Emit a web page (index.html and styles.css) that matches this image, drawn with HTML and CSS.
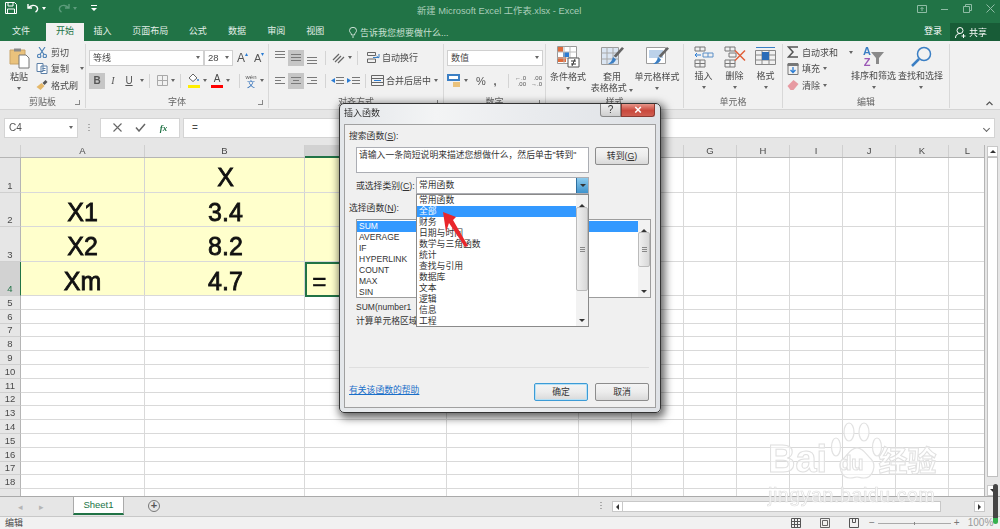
FILE: index.html
```html
<!DOCTYPE html>
<html lang="zh-CN">
<head>
    <meta charset="UTF-8">
    <title>新建 Microsoft Excel 工作表.xlsx - Excel</title>
    <link rel="stylesheet" href="styles.css">
</head>
<body>
    <div class="app">
        <!-- title bar -->
        <div class="titlebar">
            <div class="qat">
                <svg width="12" height="12" viewBox="0 0 12 12" fill="none" stroke="#fff"><path d="M.5.5h9l2 2v9H.5zM3 .5v3.5h5V.5M2.500 11.500V7h7v4.500"/></svg>
                <svg class="undo" width="12" height="10" viewBox="0 0 12 10" fill="none" stroke="#fff" stroke-width="1.400"><path d="M1 1v4h4M1.500 5C3 2 8 1.500 10 4c1.200 1.800.5 4-1.500 5"/></svg>
                <i class="caret white"></i>
                <svg class="redo" width="12" height="10" viewBox="0 0 12 10" fill="none" stroke="#5d9c7c" stroke-width="1.400"><path d="M11 1v4H7M10.500 5C9 2 4 1.500 2 4c-1.200 1.800-.5 4 1.500 5"/></svg>
                <i class="caret dim"></i>
                <svg class="custom" width="6" height="6" viewBox="0 0 6 6" fill="#fff"><path d="M0 0h6v1H0zM0 3h6L3 6z"/></svg>
            </div>
            <div class="doc-title">新建 Microsoft Excel 工作表.xlsx - Excel</div>
            <div class="winbtns">
                <svg width="10" height="8" viewBox="0 0 10 8" fill="none" stroke="#8fbca5"><path d="M.5.5h9v7h-9zM5 6V2.500M3.500 4 5 2.500 6.500 4"/></svg>
                <svg width="8" height="8" viewBox="0 0 8 8" stroke="#8fbca5"><path d="M0 4.500h7"/></svg>
                <svg width="9" height="9" viewBox="0 0 9 9" fill="none" stroke="#8fbca5"><path d="M.5 2.500h6v6h-6zM2.500 2.500v-2h6v6h-2"/></svg>
                <svg width="9" height="9" viewBox="0 0 9 9" stroke="#8fbca5"><path d="M.5.500l8 8M8.500.500l-8 8"/></svg>
            </div>
        </div>
        <div class="tabs">
            <span class="tab file">文件</span>
            <span class="tab active">开始</span>
            <span class="tab">插入</span>
            <span class="tab">页面布局</span>
            <span class="tab">公式</span>
            <span class="tab">数据</span>
            <span class="tab">审阅</span>
            <span class="tab">视图</span>
            <span class="tellme">
                <svg width="8" height="11" viewBox="0 0 8 11" fill="none" stroke="#cfe3d8"><path d="M2.500 8C2.500 6 .5 5.500.5 3.500a3.500 3.200 0 0 1 7 0C7.500 5.500 5.500 6 5.500 8zM3 10h2"/></svg>
                告诉我您想要做什么...
            </span>
            <span class="login">登录</span>
            <span class="share">
                <svg width="11" height="11" viewBox="0 0 11 11" fill="none" stroke="#fff"><circle cx="5" cy="3.500" r="3"/><path d="M.5 11c0-3 2-4.500 4.500-4.500M8.500 7v4M6.500 9h4"/></svg>
                共享
            </span>
        </div>

        <!-- ribbon -->
        <div class="ribbon">
            <div class="group g-clip">
                <div class="body">
                    <div class="big paste">
                        <svg width="21" height="22" viewBox="0 0 21 22"><path d="M1 3h15v14H1z" fill="#eac27c" stroke="#c9a468"/><path d="M5 1.500h7v3H5z" fill="#8a8a8a"/><path d="M10 8h7l3 3v10H10z" fill="#fff" stroke="#777"/></svg>
                        <span>粘贴</span><i class="caret"></i>
                    </div>
                    <div class="stack">
                        <div class="small">
                            <svg width="10" height="11" viewBox="0 0 10 11" fill="none" stroke="#4a7fb5" stroke-width="1.100"><path d="M2 0l5 7.500M8 0L3 7.500"/><circle cx="2.200" cy="9" r="1.700"/><circle cx="7.800" cy="9" r="1.700"/></svg>
                            <span>剪切</span>
                        </div>
                        <div class="small">
                            <svg width="11" height="11" viewBox="0 0 11 11" fill="#fff" stroke="#5b7fa6"><path d="M.5.500h6v8h-6zM4.500 3h6v7.500h-6z"/><path d="M6 5.500h3M6 7.500h3"/></svg>
                            <span>复制</span><i class="caret gap"></i>
                        </div>
                        <div class="small">
                            <svg width="11" height="10" viewBox="0 0 11 10"><path d="M0 7l5-4 3 3-4 4z" fill="#e5b869"/><path d="M6 3l3-3 2 2-3 3z" fill="#555"/></svg>
                            <span>格式刷</span>
                        </div>
                    </div>
                </div>
                <div class="label">剪贴板<i class="launch"></i></div>
            </div>

            <div class="group g-font">
                <div class="body col">
                    <div class="line">
                        <div class="combo font-name"><span>等线</span><i class="caret"></i></div>
                        <div class="combo font-size"><span>28</span><i class="caret"></i></div>
                        <span class="grow-a">A<sup>▴</sup></span>
                        <span class="shrink-a">A<sup>▾</sup></span>
                    </div>
                    <div class="line second">
                        <span class="fmt on b">B</span>
                        <span class="fmt i">I</span>
                        <span class="fmt u">U</span><i class="caret"></i>
                        <b class="sep"></b>
                        <svg class="borders" width="11" height="11" viewBox="0 0 11 11" fill="none" stroke="#a9a9a9"><path d="M.5.500h10v10H.5zM5.500.500v10M.5 5.500h10"/></svg><i class="caret"></i>
                        <b class="sep"></b>
                        <span class="swatch fill">
                            <svg width="11" height="9" viewBox="0 0 11 9" fill="#fff" stroke="#666"><path d="M1 5l4-4 4 4-4 3.500z"/><circle cx="10" cy="7" r="1" fill="#3b7fc4" stroke="none"/></svg>
                            <em class="yellow"></em>
                        </span><i class="caret"></i>
                        <span class="swatch letter">A<em class="red"></em></span><i class="caret"></i>
                        <b class="sep"></b>
                        <span class="wen"><small>wén</small>文</span><i class="caret"></i>
                    </div>
                </div>
                <div class="label">字体<i class="launch"></i></div>
            </div>

            <div class="group g-align">
                <div class="body col">
                    <div class="line">
                        <span class="al"><i class="lines top"></i></span>
                        <span class="al on"><i class="lines"></i></span>
                        <span class="al"><i class="lines bottom"></i></span>
                        <b class="sep"></b>
                        <svg class="orient" width="13" height="12" viewBox="0 0 13 12" fill="none" stroke="#666" stroke-width="1.200"><path d="M1 8l6-6M3 10l6-6M6 11l6-6"/></svg><i class="caret"></i>
                        <b class="sep"></b>
                        <svg class="wrap shifted" width="13" height="11" viewBox="0 0 13 11" fill="none" stroke="#666"><path d="M.5.500h8v3h-8zM.5 7h8v3.500h-8z"/><path d="M6 5.500h6V2M9.500 4l2.500 2" stroke="#3b7fc4"/></svg>
                        <span class="txt">自动换行</span>
                    </div>
                    <div class="line second">
                        <span class="al"><i class="lines left"></i></span>
                        <span class="al on"><i class="lines center"></i></span>
                        <span class="al"><i class="lines right"></i></span>
                        <b class="sep"></b>
                        <svg class="indent" width="13" height="10" viewBox="0 0 13 10"><path d="M5 1h8v1H5zM5 4h8v1H5zM5 7h8v1H5z" fill="#777"/><path d="M0 4.500 4 2v5z" fill="#2b7cd3"/></svg>
                        <svg class="indent next" width="13" height="10" viewBox="0 0 13 10"><path d="M5 1h8v1H5zM5 4h8v1H5zM5 7h8v1H5z" fill="#777"/><path d="M4 4.500 0 2v5z" fill="#2b7cd3"/></svg>
                        <b class="sep"></b>
                        <svg class="wrap" width="13" height="11" viewBox="0 0 13 11" fill="none" stroke="#666"><path d="M.5.500h12v10H.5zM.5 3.500h12M.5 7.500h12"/><path d="M3 5.500h7" stroke="#2b7cd3"/></svg>
                        <span class="txt">合并后居中</span><i class="caret gap"></i>
                    </div>
                </div>
                <div class="label">对齐方式<i class="launch"></i></div>
            </div>

            <div class="group g-num">
                <div class="body col">
                    <div class="line">
                        <div class="combo num-name"><span>数值</span><i class="caret"></i></div>
                    </div>
                    <div class="line second">
                        <svg class="money" width="14" height="13" viewBox="0 0 14 13"><path d="M0 0h13v7H0z" fill="#3b7fc4"/><path d="M2 2h9v3H2z" fill="#fff"/><path d="M6 8h7v5H6z" fill="#eac27c"/></svg><i class="caret"></i>
                        <span class="sym pct">%</span>
                        <span class="sym comma">,</span>
                        <b class="sep"></b>
                        <span class="dec">←.0<br>.00</span>
                        <span class="dec">.00<br>→.0</span>
                    </div>
                </div>
                <div class="label">数字<i class="launch"></i></div>
            </div>

            <div class="group g-style">
                <div class="body">
                    <div class="big w44">
                        <svg width="23" height="22" viewBox="0 0 23 22"><path d="M.5.500h19v17H.5z" fill="#fff" stroke="#999"/><path d="M1 1h5v5H1z" fill="#e06c3c"/><path d="M6 6h6v5H6z" fill="#2b7cd3"/><path d="M1 11h8v5H1z" fill="#e06c3c"/><path d="M7 .500v17M13 .500v17M.5 6h19M.5 12h19" stroke="#bbb" fill="none"/><path d="M11 12h11v9H11z" fill="#fff" stroke="#555"/><path d="M14 15h5M14 18h5M18 13l-3 7" stroke="#333" fill="none"/></svg>
                        <span>条件格式</span><i class="caret"></i>
                    </div>
                    <div class="big w44">
                        <svg width="23" height="22" viewBox="0 0 23 22"><path d="M.5 1.500h17v17H.5z" fill="#dbe6f3" stroke="#9c9c9c"/><path d="M6 1.500v17M12 1.500v17M.5 7h17M.5 13h17" stroke="#a9a9a9" fill="none"/><path d="M21 1l2 1.500-8 9-2.500-1.500z" fill="#666"/><path d="M12 11l3 2.500c-1 3-4 5-8 4.500 2-1 4-3 5-7z" fill="#3b7fc4"/></svg>
                        <span>套用<br>表格格式 <i class="caret inl"></i></span>
                    </div>
                    <div class="big w44 last">
                        <svg width="23" height="22" viewBox="0 0 23 22"><path d="M.5 1.500h19v16H.5z" fill="#fff" stroke="#9c9c9c"/><path d="M3 4h14v8H3z" fill="#bcd2ea"/><path d="M21 1l2 1.500-8 9-2.500-1.500z" fill="#666"/><path d="M12 11l3 2.500c-1 3-4 5-8 4.500 2-1 4-3 5-7z" fill="#3b7fc4"/></svg>
                        <span>单元格样式</span><i class="caret"></i>
                    </div>
                </div>
                <div class="label">样式</div>
            </div>

            <div class="group g-cell">
                <div class="body">
                    <div class="big w31">
                        <svg width="20" height="21" viewBox="0 0 20 21" fill="none" stroke="#777"><path d="M1 .500h10v4H1zM6 .500v4M1 13.500h10v7H1zM6 13.500v7M1 17h10"/><path d="M9 6.500h10v4H9zM14 6.500v4" stroke="#5b8fc7"/><path d="M7 8.500H1M3 6.500l-2 2 2 2" stroke="#2b7cd3"/></svg>
                        <span>插入</span><i class="caret"></i>
                    </div>
                    <div class="big w31">
                        <svg width="22" height="21" viewBox="0 0 22 21" fill="none" stroke="#777"><path d="M1 .500h10v4H1zM6 .500v4M1 13.500h10v7H1zM6 13.500v7M1 17h10M5 6.500h7v4H5z"/><path d="M11 4l10 10M21 4 11 14" stroke="#e0603a" stroke-width="1.500"/></svg>
                        <span>删除</span><i class="caret"></i>
                    </div>
                    <div class="big w31">
                        <svg width="21" height="22" viewBox="0 0 21 22" fill="none" stroke="#888"><path d="M.5 4.500h20v14H.5zM7 4.500v14M14 4.500v14M.5 9h20M.5 14h20"/><path d="M7 6h7v8H7z" fill="#2b6cb8" stroke="none"/><path d="M1 1.500h19" stroke="#3b7fc4"/></svg>
                        <span>格式</span><i class="caret"></i>
                    </div>
                </div>
                <div class="label">单元格</div>
            </div>

            <div class="group g-edit">
                <div class="body">
                    <div class="stack edit">
                        <div class="small">
                            <svg width="12" height="12" viewBox="0 0 12 12" fill="none" stroke="#555" stroke-width="1.500"><path d="M11 1H1.500L6 6l-4.500 5H11"/></svg>
                            <span>自动求和</span><i class="caret gap"></i>
                        </div>
                        <div class="small">
                            <svg width="11" height="12" viewBox="0 0 11 12" fill="none" stroke="#777"><path d="M.5.500h10v11H.5z"/><path d="M0 1h11v2H0z" fill="#777" stroke="none"/><path d="M5.500 4v5M3 7l2.500 2.500L8 7" stroke="#2b7cd3" stroke-width="1.300"/></svg>
                            <span>填充</span><i class="caret"></i>
                        </div>
                        <div class="small">
                            <svg width="11" height="10" viewBox="0 0 11 10"><path d="M0 6l6-6 5 4-5 6H3z" fill="#e79aa2"/></svg>
                            <span>清除</span><i class="caret"></i>
                        </div>
                    </div>
                    <div class="big w48 sort">
                        <div class="sort-icon">
                            <div class="az"><span class="blue">A</span><span class="purple">Z</span></div>
                            <svg width="13" height="13" viewBox="0 0 13 13"><path d="M0 1h13L8 7v6H5V7z" fill="#8a8a8a"/></svg>
                        </div>
                        <span>排序和筛选</span><i class="caret"></i>
                    </div>
                    <div class="big w48">
                        <svg width="22" height="22" viewBox="0 0 22 22" fill="none" stroke="#3b7fc4"><circle cx="14" cy="8" r="6.500" stroke-width="1.500"/><path d="M9 13l-7 7" stroke-width="2.500"/></svg>
                        <span>查找和选择</span><i class="caret"></i>
                    </div>
                </div>
                <div class="label">编辑</div>
            </div>
            <svg class="collapse" width="7" height="5" viewBox="0 0 7 5" fill="none" stroke="#555" stroke-width="1.200"><path d="M.5 4l3-3 3 3"/></svg>
        </div>

        <!-- formula bar -->
        <div class="formula">
            <div class="namebox"><span>C4</span><i class="caret"></i></div>
            <span class="dots"></span>
            <div class="fx-btns">
                <svg width="9" height="9" viewBox="0 0 9 9" stroke="#666" stroke-width="1.100"><path d="M.5.500l8 8M8.500.500l-8 8"/></svg>
                <svg width="11" height="9" viewBox="0 0 11 9" fill="none" stroke="#666" stroke-width="1.500"><path d="M1 4.500 4 8l6-7"/></svg>
                <em>fx</em>
            </div>
            <div class="input">=<i class="fold"></i></div>
        </div>

        <!-- sheet -->
        <div class="sheet">
            <div class="grid">
                <div class="colhead">
                    <span class="corner"></span>
                    <span class="ch a">A</span>
                    <span class="ch b">B</span>
                    <span class="ch c cur"></span>
                    <span class="ch d"></span>
                    <span class="ch w"></span>
                    <span class="ch w"></span>
                    <span class="ch w">G</span>
                    <span class="ch w">H</span>
                    <span class="ch w">I</span>
                    <span class="ch w">J</span>
                    <span class="ch w">K</span>
                    <span class="ch l">L</span>
                </div>
                <div class="row tall"><span class="rh">1</span><div class="cells"><span class="cell a"></span><span class="cell b">X</span><span class="cell c"></span></div></div>
                <div class="row tall"><span class="rh">2</span><div class="cells"><span class="cell a">X1</span><span class="cell b">3.4</span><span class="cell c"></span></div></div>
                <div class="row tall"><span class="rh">3</span><div class="cells"><span class="cell a">X2</span><span class="cell b">8.2</span><span class="cell c"></span></div></div>
                <div class="row tall"><span class="rh cur">4</span><div class="cells"><span class="cell a">Xm</span><span class="cell b">4.7</span><span class="cell c sel">=</span></div></div>
                <div class="row"><span class="rh">5</span><div class="cells"></div></div>
                <div class="row"><span class="rh">6</span><div class="cells"></div></div>
                <div class="row"><span class="rh">7</span><div class="cells"></div></div>
                <div class="row"><span class="rh">8</span><div class="cells"></div></div>
                <div class="row"><span class="rh">9</span><div class="cells"></div></div>
                <div class="row"><span class="rh">10</span><div class="cells"></div></div>
                <div class="row"><span class="rh">11</span><div class="cells"></div></div>
                <div class="row"><span class="rh">12</span><div class="cells"></div></div>
                <div class="row"><span class="rh">13</span><div class="cells"></div></div>
                <div class="row"><span class="rh">14</span><div class="cells"></div></div>
                <div class="row"><span class="rh">15</span><div class="cells"></div></div>
                <div class="row"><span class="rh">16</span><div class="cells"></div></div>
                <div class="row"><span class="rh">17</span><div class="cells"></div></div>
                <div class="row"><span class="rh">18</span><div class="cells"></div></div>
                <div class="row"><span class="rh"></span><div class="cells"></div></div>
            </div>
            <div class="vscroll">
                <span class="sb-btn"><i class="tri up"></i></span>
                <span class="sb-thumb"></span>
                <span class="sb-btn"><i class="tri"></i></span>
            </div>
        </div>

        <!-- sheet tabs -->
        <div class="sheetbar">
            <span class="nav">◂</span>
            <span class="nav">▸</span>
            <span class="sheet-tab">Sheet1</span>
            <span class="add">+</span>
            <span class="dots tabdots"></span>
            <div class="hscroll">
                <span class="hs-btn"><i class="tri left"></i></span>
                <span class="hs-thumb"></span>
                <span class="hs-track"></span>
                <span class="hs-btn"><i class="tri right"></i></span>
            </div>
        </div>

        <!-- status bar -->
        <div class="status">
            <span class="mode">编辑</span>
            <div class="views">
                <svg width="10" height="10" viewBox="0 0 10 10" fill="none" stroke="#555"><path d="M.5.500h9v9h-9zM3.500.500v9M6.500.500v9M.5 3.500h9M.5 6.500h9"/></svg>
                <svg width="10" height="10" viewBox="0 0 10 10" fill="none" stroke="#666"><path d="M.5.500h9v9h-9zM2.500 2.500h5v5h-5z"/></svg>
                <svg width="10" height="10" viewBox="0 0 10 10" fill="none" stroke="#555"><path d="M.5.500h9v9h-9zM3.500.500v4h3v-4"/></svg>
            </div>
            <div class="zoom">
                <span>−</span>
                <i class="slider"></i>
                <span>+</span>
                <span class="pct-z">100%</span>
            </div>
        </div>

        <!-- Insert function dialog -->
        <div class="dialog">
            <div class="dlg-title">
                <span>插入函数</span>
                <div class="dlg-btns"><span class="help">?</span><span class="close">×</span></div>
            </div>
            <div class="panel">
                <div class="lbl">搜索函数(<u>S</u>):</div>
                <div class="search-row">
                    <div class="search-box">请输入一条简短说明来描述您想做什么，然后单击"转到"</div>
                    <span class="btn">转到(<u>G</u>)</span>
                </div>
                <div class="cat-row">
                    <span class="cat-lbl">或选择类别(<u>C</u>):</span>
                    <div class="select">常用函数<span class="sel-arrow"><i class="tri"></i></span></div>
                </div>
                <div class="lbl pick">选择函数(<u>N</u>):</div>
                <div class="fn-list">
                    <div class="fn-items">
                        <div class="hl">SUM</div>
                        <div>AVERAGE</div>
                        <div>IF</div>
                        <div>HYPERLINK</div>
                        <div>COUNT</div>
                        <div>MAX</div>
                        <div>SIN</div>
                    </div>
                    <div class="list-sb">
                        <span class="up"><i class="tri up"></i></span>
                        <span class="th"><b></b></span>
                        <span class="dn"><i class="tri"></i></span>
                    </div>
                </div>
                <div class="sig">SUM(number1</div>
                <div class="desc">计算单元格区域</div>
                <div class="foot">
                    <a class="help-link">有关该函数的帮助</a>
                    <span class="btn default">确定</span>
                    <span class="btn">取消</span>
                </div>
                <div class="dropdown">
                    <div class="dd-items">
                        <div>常用函数</div>
                        <div class="hl">全部</div>
                        <div>财务</div>
                        <div>日期与时间</div>
                        <div>数学与三角函数</div>
                        <div>统计</div>
                        <div>查找与引用</div>
                        <div>数据库</div>
                        <div>文本</div>
                        <div>逻辑</div>
                        <div>信息</div>
                        <div>工程</div>
                    </div>
                    <div class="list-sb">
                        <span class="up"><i class="tri up"></i></span>
                        <span class="th"><b></b></span>
                        <span class="dn"><i class="tri"></i></span>
                    </div>
                </div>
            </div>
        </div>

        <!-- annotation arrow -->
        <svg class="arrow" width="32" height="42" viewBox="0 0 32 42"><path d="M2 3l13 5-3 3 15 26-3 1-16-24-3 9z" fill="#e9262b"/></svg>

        <!-- watermark -->
        <div class="mark">
            <svg class="paw" width="54" height="58" viewBox="0 0 54 58" fill="rgba(255,255,255,.6)" stroke="#e2e2e2" stroke-width="1.200"><ellipse cx="6" cy="25" rx="4.500" ry="9"/><ellipse cx="19" cy="10" rx="5" ry="9"/><ellipse cx="34" cy="10" rx="5" ry="9"/><ellipse cx="47" cy="25" rx="4.500" ry="9"/><path d="M27 26c6 0 9 6 14 11 6 6 2 19-7 19-4 0-5-1-7-1s-3 1-7 1c-9 0-13-13-7-19 5-5 8-11 14-11z"/></svg>
            <div class="mark-big"><span>Bai</span><span class="du">du</span><span class="jy">经验</span></div>
            <div class="mark-url">jingyan.baidu.com</div>
        </div>

        <div class="rec-bar"></div>
    </div>
</body>
</html>
```

FILE: styles.css
```css
* {
    box-sizing: border-box;
}

body {
    margin: 0;
    font-family: "Liberation Sans", "Noto Sans CJK SC", sans-serif;
    font-size: 9px;
    color: #4a4a4a;
    background: #fff;
}

.app {
    position: relative;
    width: 1000px;
    height: 529px;
    overflow: hidden;
    display: flex;
    flex-direction: column;
    filter: blur(.3px); /* the capture is soft */
}

i, em, u {
    font-style: normal;
}

/* little triangles */
.caret {
    display: inline-block;
    width: 0;
    height: 0;
    border: 2.5px solid transparent;
    border-top: 3px solid #666;
    border-bottom: 0;
    flex: none;
}

.caret.white { border-top-color: #fff; }
.caret.dim { border-top-color: #5d9c7c; }
.caret.gap { margin-left: 8px; }
.caret.inl { vertical-align: middle; }

.tri {
    display: inline-block;
    width: 0;
    height: 0;
    border-left: 3px solid transparent;
    border-right: 3px solid transparent;
    border-top: 3px solid #333;
}

.tri.up {
    border-top: 0;
    border-bottom: 3px solid #333;
}

.tri.left {
    border: 0;
    border-top: 3px solid transparent;
    border-bottom: 3px solid transparent;
    border-right: 3px solid #333;
}

.tri.right {
    border: 0;
    border-top: 3px solid transparent;
    border-bottom: 3px solid transparent;
    border-left: 3px solid #333;
}

/* title bar */
.titlebar {
    height: 23px;
    background: #217346;
    display: flex;
    align-items: flex-start;
    flex: none;
}

.qat {
    width: 200px;
    padding: 2px 0 0 5px;
    display: flex;
    align-items: center;
    gap: 3px;
}

.qat .undo { margin-left: 7px; }
.qat .redo { margin-left: 9px; }
.qat .custom { margin-left: 11px; }

.doc-title {
    width: 520px;
    padding: 5px 0 0 217px;
    font-size: 9.300px;
    line-height: 12px;
    color: #a9cdb9;
    white-space: nowrap;
}

.winbtns {
    margin-left: auto;
    display: flex;
    align-items: center;
    gap: 14px;
    padding: 4px 5px 0 0;
}

.tabs {
    height: 18px;
    background: #217346;
    display: flex;
    align-items: flex-end;
    flex: none;
    color: #e4efe9;
    padding-left: 3px;
}

.tab {
    width: 39.200px;
    height: 18px;
    line-height: 17px;
    text-align: center;
    white-space: nowrap;
}

.tab.file { width: 36px; }

.tab.active {
    width: 38px;
    margin-left: 7px;
    margin-right: -1px;
    background: #f1f1f1;
    color: #217346;
}

.tab:nth-child(4) { width: 56px; }

.tellme {
    margin-left: 14px;
    height: 18px;
    display: flex;
    align-items: center;
    gap: 3px;
    color: #c9e0d3;
}

.login {
    margin-left: auto;
    height: 18px;
    line-height: 17px;
    margin-right: 8px;
    color: #fff;
}

.share {
    width: 50px;
    height: 18px;
    background: #185c37;
    color: #fff;
    display: flex;
    align-items: center;
    gap: 3px;
    padding-left: 5px;
}

/* ribbon */
.ribbon {
    position: relative;
    height: 69px;
    background: #f1f1f1;
    border-bottom: 1px solid #d4d4d4;
    display: flex;
    flex: none;
}

.group {
    position: relative;
    display: flex;
    flex-direction: column;
    border-right: 1px solid #d8d8d8;
    margin: 3px 0 1px;
    flex: none;
}

.g-clip { width: 86px; }
.g-font { width: 183px; }
.g-align { width: 175px; }
.g-num { width: 102px; }
.g-style { width: 138px; }
.g-cell { width: 99px; }
.g-edit { width: 167px; }

.group .body {
    height: 52px;
    display: flex;
    align-items: flex-start;
}

.group .body.col {
    flex-direction: column;
}

.label {
    position: relative;
    height: 12px;
    line-height: 12px;
    margin-top: 1px;
    text-align: center;
    color: #666;
}

.launch {
    position: absolute;
    right: 5px;
    top: 4px;
    width: 5px;
    height: 5px;
    border-left: 1px solid #888;
    border-bottom: 1px solid #888;
    transform: scaleX(-1);
}

.big {
    display: flex;
    flex-direction: column;
    align-items: center;
    line-height: 11px;
    text-align: center;
    flex: none;
    white-space: nowrap;
}

.big svg {
    height: 22px;
    margin-bottom: 3px;
}

.big .caret {
    margin-top: 4px;
}

.paste {
    width: 28px;
    margin-left: 5px;
    padding-top: 3px;
}

.stack {
    margin-left: 3px;
    display: flex;
    flex-direction: column;
}

.small {
    height: 16.500px;
    display: flex;
    align-items: center;
    gap: 3px;
    white-space: nowrap;
}

.small svg {
    width: 12px;
    flex: none;
}

.line {
    height: 17px;
    margin-top: 5px;
    display: flex;
    align-items: center;
    flex: none;
}

.line.second {
    margin-top: 6px;
}

.combo {
    height: 16px;
    background: #fff;
    border: 1px solid #d0d0d0;
    display: flex;
    align-items: center;
    justify-content: space-between;
    padding: 0 3px;
}

.font-name { width: 115px; margin-left: 3px; }
.font-size { width: 29px; font-size: 9.500px; }
.num-name { width: 96px; margin-left: 3px; }

.grow-a, .shrink-a {
    font-size: 11px;
    color: #555;
    margin-left: 4px;
    width: 15px;
    white-space: nowrap;
}

.grow-a { font-size: 12px; }

.grow-a sup, .shrink-a sup {
    font-size: 6px;
    color: #2b7cd3;
    vertical-align: 6px;
    line-height: 0;
}

.shrink-a { margin-left: 2px; }

.g-font .second { padding-left: 3px; }

.fmt {
    width: 16px;
    height: 16px;
    line-height: 16px;
    text-align: center;
    font-size: 10px;
    color: #555;
}

.fmt.on { background: #c6c6c6; }
.fmt.b { font-weight: bold; }
.fmt.i { font-style: italic; font-family: "Liberation Serif", serif; }
.fmt.u { text-decoration: underline; }

.second .caret { margin-left: 3px; }

.sep {
    width: 1px;
    height: 14px;
    background: #d4d4d4;
    margin: 0 5px;
    flex: none;
}

.borders { margin-left: 2px; flex: none; }

.swatch {
    position: relative;
    width: 12px;
    height: 15px;
    display: block;
    flex: none;
}

.swatch.fill { margin-left: 2px; }

.swatch + .caret { margin-right: 4px; }

.swatch svg { display: block; }

.swatch em {
    position: absolute;
    left: 0;
    bottom: 0;
    width: 12px;
    height: 3px;
}

.yellow { background: #ffef00; }
.red { background: #f00; }

.letter {
    font-size: 10px;
    line-height: 12px;
    text-align: center;
}

.wen {
    width: 12px;
    font-size: 8px;
    line-height: 7px;
    text-align: center;
    color: #2b6cb8;
}

.wen small {
    display: block;
    font-size: 6px;
    color: #555;
}

.al {
    width: 16px;
    height: 16px;
    display: flex;
    flex: none;
    align-items: center;
    justify-content: center;
}

.al.on { background: #c6c6c6; }

.g-align .line { padding-left: 3px; }

.lines {
    display: block;
    width: 10px;
    height: 7px;
    background:
        linear-gradient(#7a7a7a, #7a7a7a) 0 0 / 10px 1px no-repeat,
        linear-gradient(#7a7a7a, #7a7a7a) 0 3px / 10px 1px no-repeat,
        linear-gradient(#7a7a7a, #7a7a7a) 0 6px / 10px 1px no-repeat;
}

.lines.top { transform: translateY(-3px); }
.lines.bottom { transform: translateY(3px); }

.lines.left {
    background:
        linear-gradient(#7a7a7a, #7a7a7a) 0 0 / 10px 1px no-repeat,
        linear-gradient(#7a7a7a, #7a7a7a) 0 3px / 6px 1px no-repeat,
        linear-gradient(#7a7a7a, #7a7a7a) 0 6px / 10px 1px no-repeat;
}

.lines.center {
    background:
        linear-gradient(#7a7a7a, #7a7a7a) 0 0 / 10px 1px no-repeat,
        linear-gradient(#7a7a7a, #7a7a7a) 2px 3px / 6px 1px no-repeat,
        linear-gradient(#7a7a7a, #7a7a7a) 0 6px / 10px 1px no-repeat;
}

.lines.right {
    background:
        linear-gradient(#7a7a7a, #7a7a7a) 0 0 / 10px 1px no-repeat,
        linear-gradient(#7a7a7a, #7a7a7a) 4px 3px / 6px 1px no-repeat,
        linear-gradient(#7a7a7a, #7a7a7a) 0 6px / 10px 1px no-repeat;
}

.orient { flex: none; margin-left: 1px; }

.orient + .caret { margin-left: 3px; }

.indent { flex: none; }
.indent + .indent { margin-left: 3px; }

.wrap { flex: none; margin-right: 2px; }
.wrap.shifted { margin-left: 4px; }

.txt { white-space: nowrap; }

.g-num .second { padding-left: 3px; }

.money { flex: none; }

.sym {
    font-size: 11px;
    color: #555;
    width: 14px;
    text-align: center;
}

.pct { margin-left: 6px; }
.comma { font-weight: bold; }

.dec {
    width: 12px;
    font-size: 6px;
    line-height: 6px;
    text-align: right;
    margin-right: 4px;
    color: #555;
    white-space: nowrap;
}

.g-num .sep { margin-left: 6px; }

.w44 { width: 44px; }
.w44.last { width: 46px; }
.w44 svg { margin-top: 2px; margin-bottom: 4px; }
.w31 { width: 31px; padding-top: 2px; }
.w31:first-child { margin-left: 4px; }
.w48 { width: 47px; padding-top: 2px; }
.sort { margin-left: 3px; }

.stack.edit { margin-left: 4px; width: 60px; }

.sort-icon {
    height: 22px;
    margin-bottom: 3px;
    display: flex;
    align-items: center;
}

.sort-icon svg {
    height: 13px;
    margin: 0;
}

.az {
    display: flex;
    flex-direction: column;
    font-size: 11px;
    line-height: 11px;
    font-weight: bold;
}

.blue { color: #3b7fc4; }
.purple { color: #9b59b6; }

.collapse {
    position: absolute;
    left: 986px;
    top: 60px;
}

/* formula bar */
.formula {
    height: 35px;
    background: #e6e6e6;
    display: flex;
    align-items: center;
    padding: 0 5px 0 4px;
    flex: none;
}

.namebox {
    width: 74px;
    height: 20px;
    background: #fff;
    border: 1px solid #d4d4d4;
    display: flex;
    align-items: center;
    justify-content: space-between;
    padding: 0 4px;
    font-size: 10px;
    color: #555;
}

.dots {
    width: 2px;
    height: 8px;
    margin: 0 10px;
    background: repeating-linear-gradient(#aaa 0 1px, transparent 1px 3px);
}

.fx-btns {
    width: 80px;
    height: 20px;
    background: #fff;
    border: 1px solid #d4d4d4;
    display: flex;
    align-items: center;
    justify-content: space-around;
    padding: 0 5px;
}

.fx-btns em {
    font: italic bold 9px "Liberation Serif", serif;
    color: #217346;
}

.input {
    position: relative;
    flex: 1;
    height: 20px;
    margin-left: 3px;
    background: #fff;
    border: 1px solid #d4d4d4;
    padding-left: 8px;
    line-height: 18px;
    font-size: 10px;
}

.fold {
    position: absolute;
    right: 5px;
    top: 7px;
    width: 5px;
    height: 5px;
    border-right: 1px solid #666;
    border-bottom: 1px solid #666;
    transform: rotate(45deg);
}

/* sheet */
.sheet {
    height: 351px;
    display: flex;
    flex: none;
}

.grid {
    width: 985px;
    border-right: 1px solid #b5b5b5;
    overflow: hidden;
}

.colhead {
    height: 13px;
    display: flex;
    background: #e6e6e6;
    border-bottom: 1px solid #b5b5b5;
    font-size: 9.500px;
    line-height: 12px;
}

.corner {
    width: 21px;
    border-right: 1px solid #cfcfcf;
    flex: none;
}

.ch {
    border-right: 1px solid #cfcfcf;
    text-align: center;
    flex: none;
}

.ch.a { width: 124px; }
.ch.b { width: 160px; }
.ch.c { width: 142px; }
.ch.d { width: 131px; }
.ch.w { width: 53px; }
.ch.l { width: 37px; border: 0; }

.ch.cur {
    background: #d2d2d2;
    border-bottom: 2px solid #217346;
    height: 13px;
}

.row {
    height: 13.800px;
    display: flex;
}

.row.tall {
    height: 34.500px;
}

.rh {
    width: 21px;
    flex: none;
    background: #e6e6e6;
    border-right: 1px solid #b5b5b5;
    border-bottom: 1px solid #cfcfcf;
    display: flex;
    align-items: flex-end;
    justify-content: center;
    font-size: 9.500px;
    line-height: 12px;
}

.rh.cur {
    background: #d2d2d2;
    color: #217346;
    border-right: 1px solid #217346;
}

.cells {
    flex: 1;
    display: flex;
    border-bottom: 1px solid #d9d9d9;
    background-image:
        linear-gradient(#d9d9d9, #d9d9d9), linear-gradient(#d9d9d9, #d9d9d9),
        linear-gradient(#d9d9d9, #d9d9d9), linear-gradient(#d9d9d9, #d9d9d9),
        linear-gradient(#d9d9d9, #d9d9d9), linear-gradient(#d9d9d9, #d9d9d9),
        linear-gradient(#d9d9d9, #d9d9d9), linear-gradient(#d9d9d9, #d9d9d9),
        linear-gradient(#d9d9d9, #d9d9d9), linear-gradient(#d9d9d9, #d9d9d9),
        linear-gradient(#d9d9d9, #d9d9d9);
    background-size: 1px 100%;
    background-repeat: no-repeat;
    background-position: 123px 0, 283px 0, 425px 0, 557px 0, 610px 0, 662px 0,
        715px 0, 768px 0, 821px 0, 874px 0, 927px 0;
}

.cell {
    background: #ffffcc;
    border-right: 1px solid #d4d4d4;
    text-align: center;
    padding-top: 2px;
    font-size: 25px;
    line-height: 34px;
    color: #111;
    -webkit-text-stroke: .8px #111;
    flex: none;
}

.cell.a { width: 124px; }
.cell.b { width: 160px; padding-left: 2px; }
.cell.c { width: 142px; }

.cell.sel {
    outline: 2px solid #217346;
    outline-offset: -2px;
    text-align: left;
    padding-left: 7px;
    height: 35px;
    -webkit-text-stroke: .3px #111;
}

.vscroll {
    width: 15px;
    background: #e6e6e6;
    padding: 1px 2px;
    display: flex;
    flex-direction: column;
}

.sb-btn {
    height: 11px;
    background: #fff;
    border: 1px solid #c8c8c8;
    display: flex;
    align-items: center;
    justify-content: center;
    flex: none;
}

.sb-thumb {
    height: 320px;
    background: #fff;
    border: 1px solid #c0c0c0;
    margin-bottom: 8px;
    flex: none;
}

/* sheet tabs */
.sheetbar {
    height: 21px;
    background: #e6e6e6;
    border-top: 1px solid #aaa;
    border-bottom: 1px solid #c8c8c8;
    display: flex;
    align-items: flex-start;
    flex: none;
}

.nav {
    width: 21px;
    margin-top: 3px;
    text-align: center;
    color: #b5b5b5;
    line-height: 14px;
}

.nav:first-child { margin-left: 10px; }

.sheet-tab {
    width: 51px;
    height: 18px;
    margin-left: 21px;
    background: #fff;
    border: 1px solid #aaa;
    border-top: 0;
    border-bottom: 2px solid #217346;
    color: #217346;
    text-align: center;
    line-height: 16px;
    font-size: 9.500px;
}

.add {
    width: 12px;
    height: 12px;
    margin: 3px 0 0 24px;
    border: 1px solid #777;
    border-radius: 50%;
    text-align: center;
    line-height: 9px;
    font-size: 11px;
    font-weight: bold;
    color: #555;
}

.tabdots {
    margin: 5px 0 0 440px;
}

.hscroll {
    margin-left: auto;
    margin-top: 4px;
    display: flex;
    padding-right: 15px;
    width: 388px;
    height: 11px;
}

.hs-btn {
    width: 11px;
    height: 11px;
    background: #fff;
    border: 1px solid #c8c8c8;
    display: flex;
    align-items: center;
    justify-content: center;
    flex: none;
}

.hs-thumb {
    width: 318px;
    background: #fff;
    border: 1px solid #c8c8c8;
    border-left: 0;
    flex: none;
}

.hs-track { flex: 1; }

/* status bar */
.status {
    flex: 1;
    background: #f1f1f1;
    display: flex;
    align-items: center;
    line-height: 12px;
    padding-left: 5px;
}

.views {
    margin-left: 768px;
    display: flex;
    gap: 19px;
    width: 70px;
    flex: none;
}

.zoom {
    display: flex;
    align-items: center;
    color: #777;
    margin-left: 8px;
    font-size: 10px;
    flex: none;
}

.slider {
    position: relative;
    width: 73px;
    height: 1px;
    margin: 0 3px;
    background: #aaa;
}

.slider::after {
    content: "";
    position: absolute;
    left: 36px;
    top: -1px;
    width: 1px;
    height: 3px;
    background: #888;
}

.pct-z {
    margin-left: 8px;
    color: #999;
    white-space: nowrap;
}

/* dialog */
.dialog {
    position: absolute;
    left: 339px;
    top: 103px;
    width: 322px;
    height: 310px;
    border: 1px solid #333;
    border-radius: 5px;
    background: linear-gradient(90deg, #e4e7ea, #f3f4f5 30%, #e9ebee 60%, #dfe2e6);
    box-shadow: 2px 3px 8px 2px rgba(0, 0, 0, .6);
    padding: 0 4px 4px;
    display: flex;
    flex-direction: column;
    font-size: 8.800px;
    line-height: 11px;
    color: #333;
}

.dlg-title {
    height: 20px;
    padding-top: 4px;
    display: flex;
    justify-content: space-between;
    flex: none;
    font-size: 9px;
}

.dlg-btns {
    display: flex;
    margin-top: -4px;
    margin-right: 1px;
    height: 13px;
}

.help {
    width: 21px;
    border: 1px solid #888;
    border-top: 0;
    border-radius: 0 0 0 3px;
    background: linear-gradient(#f0f0f0, #cfcfcf);
    text-align: center;
    font-size: 10px;
    line-height: 11px;
}

.close {
    width: 34px;
    border: 1px solid #8c3a32;
    border-top: 0;
    border-radius: 0 0 3px 0;
    background: linear-gradient(#e8968a, #c9483c 55%, #cf5f52);
    color: #fff;
    text-align: center;
    font-weight: bold;
    font-size: 13px;
    line-height: 11px;
}

.panel {
    position: relative;
    flex: 1;
    background: #f0f0f0;
    border: 1px solid #a0a0a0;
    padding: 6px 6px 5px 4px;
    display: flex;
    flex-direction: column;
}

.lbl {
    height: 11px;
    flex: none;
}

.search-row {
    display: flex;
    justify-content: space-between;
    margin: 5px 0 0 7px;
    flex: none;
}

.search-box {
    width: 233px;
    height: 26px;
    background: #fff;
    border: 1px solid #abadb3;
    padding: 2px 2px;
    white-space: nowrap;
    overflow: hidden;
}

.btn {
    width: 54px;
    height: 18px;
    border: 1px solid #8c8c8c;
    border-radius: 2px;
    background: linear-gradient(#f4f4f4, #ececec 50%, #d9d9d9);
    text-align: center;
    line-height: 16px;
    flex: none;
}

.btn.default {
    border-color: #3c9bd6;
    box-shadow: inset 0 0 0 1px #b6e0f5;
}

.cat-row {
    margin: 4px 0 0 7px;
    display: flex;
    align-items: center;
    flex: none;
}

.cat-lbl {
    width: 60px;
    white-space: nowrap;
    padding-top: 1px;
}

.select {
    position: relative;
    width: 173px;
    height: 17px;
    background: #fff;
    border: 1px solid #abadb3;
    padding-left: 2px;
    line-height: 15px;
}

.sel-arrow {
    position: absolute;
    right: 0;
    top: 0;
    width: 12px;
    height: 15px;
    background: linear-gradient(#8ccbee, #3f93cc);
    border-left: 1px solid #2f6f9f;
    display: flex;
    align-items: center;
    justify-content: center;
}

.pick {
    margin-top: 9px;
}

.fn-list {
    display: flex;
    width: 295px;
    height: 79px;
    margin: 5px 0 0 7px;
    background: #fff;
    border: 1px solid #9d9d9d;
    flex: none;
    font-size: 8.500px;
}

.fn-items {
    flex: 1;
    padding-top: 1px;
}

.fn-items div, .dd-items div {
    height: 11px;
    padding-left: 2px;
    line-height: 11px;
    white-space: nowrap;
}

.hl {
    background: #3399ff;
    color: #fff;
}

.list-sb {
    width: 12px;
    background: #f2f2f2;
    display: flex;
    flex-direction: column;
    flex: none;
}

.list-sb .up, .list-sb .dn {
    height: 12px;
    display: flex;
    align-items: center;
    justify-content: center;
    flex: none;
}

.list-sb .dn { margin-top: auto; }

.list-sb .th {
    height: 35px;
    background: linear-gradient(90deg, #f0f0f0, #d8d8d8);
    border: 1px solid #bbb;
    border-radius: 2px;
    display: flex;
    align-items: center;
    justify-content: center;
}

.list-sb .th b {
    width: 5px;
    height: 5px;
    background: repeating-linear-gradient(#888 0 1px, transparent 1px 2px);
}

.dropdown .list-sb .th {
    height: 84px;
}

.sig {
    margin: 4px 0 0 7px;
    font-size: 8.500px;
}

.desc {
    margin: 3px 0 0 7px;
}

.foot {
    margin-top: auto;
    height: 24px;
    padding-top: 5px;
    display: flex;
    gap: 7px;
    position: relative;
    justify-content: flex-end;
}

.foot::before {
    content: "";
    position: absolute;
    left: 0;
    right: 0;
    top: -11px;
    height: 1px;
    background: #dfdfdf;
}

.help-link {
    margin-right: auto;
    color: #1a6fc9;
    text-decoration: underline;
    line-height: 15px;
}

.dropdown {
    position: absolute;
    left: 71px;
    top: 69px;
    width: 173px;
    height: 133px;
    background: #fff;
    border: 1px solid #8a8a8a;
    display: flex;
}

.dd-items {
    flex: 1;
}

/* red arrow over the list */
.arrow {
    position: absolute;
    left: 441px;
    top: 209px;
}

/* baidu watermark */
.mark {
    position: absolute;
    left: 768px;
    top: 422px;
    width: 190px;
    height: 84px;
    pointer-events: none;
}

.paw {
    position: absolute;
    left: 62px;
    top: 0;
}

.mark-big {
    position: absolute;
    left: 0;
    top: 18px;
    font: bold 38px/38px "Liberation Sans", sans-serif;
    color: rgba(255, 255, 255, .5);
    -webkit-text-stroke: 1px #e0e0e0;
    white-space: nowrap;
}

.mark-big .du {
    font-size: 20px;
    margin-left: 12px;
    position: relative;
    top: -2px;
}

.mark-big .jy {
    font: bold 29px/38px "Noto Sans CJK SC", sans-serif;
    margin-left: 15px;
}

.mark-url {
    position: absolute;
    left: 0;
    top: 62px;
    font-size: 19.500px;
    line-height: 22px;
    color: rgba(255, 255, 255, .75);
    -webkit-text-stroke: .7px #dedede;
    letter-spacing: .6px;
    white-space: nowrap;
}

/* dark handle at the right edge of the capture */
.rec-bar {
    position: absolute;
    left: 993px;
    top: 484px;
    width: 5px;
    height: 40px;
    border-radius: 3px;
    background: linear-gradient(#444 85%, #35b04f 85%);
}
```
